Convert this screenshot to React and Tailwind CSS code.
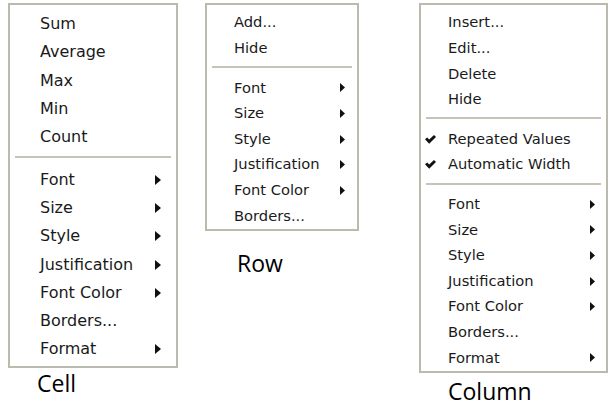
import React from "react";

const Arrow = ({ big }) =>
  big ? (
    <svg width="6" height="10" viewBox="0 0 6 10" className="shrink-0">
      <path d="M0 0 L6 5 L0 10 Z" fill="#111" />
    </svg>
  ) : (
    <svg width="5" height="9" viewBox="0 0 5 9" className="shrink-0">
      <path d="M0 0 L5 4.5 L0 9 Z" fill="#111" />
    </svg>
  );

const Check = () => (
  <svg width="11" height="9" viewBox="0 0 11 9" className="shrink-0">
    <path d="M0 4.2 L2.2 2.4 L4.2 4.6 L9 0 L11 1.9 L4.2 8.7 Z" fill="#111" />
  </svg>
);

const cellItems = [
  { label: "Sum" },
  { label: "Average" },
  { label: "Max" },
  { label: "Min" },
  { label: "Count" },
  "sep",
  { label: "Font", arrow: true },
  { label: "Size", arrow: true },
  { label: "Style", arrow: true },
  { label: "Justification", arrow: true },
  { label: "Font Color", arrow: true },
  { label: "Borders..." },
  { label: "Format", arrow: true },
];

const rowItems = [
  { label: "Add..." },
  { label: "Hide" },
  "sep",
  { label: "Font", arrow: true },
  { label: "Size", arrow: true },
  { label: "Style", arrow: true },
  { label: "Justification", arrow: true },
  { label: "Font Color", arrow: true },
  { label: "Borders..." },
];

const columnItems = [
  { label: "Insert..." },
  { label: "Edit..." },
  { label: "Delete" },
  { label: "Hide" },
  "sep",
  { label: "Repeated Values", check: true },
  { label: "Automatic Width", check: true },
  "sep",
  { label: "Font", arrow: true },
  { label: "Size", arrow: true },
  { label: "Style", arrow: true },
  { label: "Justification", arrow: true },
  { label: "Font Color", arrow: true },
  { label: "Borders..." },
  { label: "Format", arrow: true },
];

// one popup menu, sizes passed in as full class strings
const Menu = ({ items, big, boxClass, itemClass, textClass, checkClass }) => (
  <div className={`bg-white border-2 border-[#bcb9ad] ${boxClass}`}>
    {items.map((item, i) =>
      item === "sep" ? (
        <div key={i} className="py-[6px] px-[5px]">
          <div className="h-[2px] bg-[#c6c3b8]" />
        </div>
      ) : (
        <div key={i} className={`relative flex items-center ${itemClass}`}>
          {item.check && (
            <span className={`absolute flex translate-y-[1px] ${checkClass}`}>
              <Check />
            </span>
          )}
          <span className={`flex-1 text-[#1a1a1a] translate-y-[1px] ${textClass}`}>
            {item.label}
          </span>
          {item.arrow && (
            <span className="flex translate-y-[1px]">
              <Arrow big={big} />
            </span>
          )}
        </div>
      )
    )}
  </div>
);

export default function App() {
  return (
    <div
      className="w-[608px] h-[406px] bg-white flex items-start overflow-hidden"
      style={{ fontFamily: '"DejaVu Sans", Verdana, sans-serif' }}
    >
      {/* Cell */}
      <div className="ml-[8px] mt-[3px] flex flex-col">
        <Menu
          items={cellItems}
          big
          boxClass="w-[170px] pt-[4px] pb-[3px]"
          itemClass="h-[28.3px] pl-[30px] pr-[15px]"
          textClass="text-[16px] leading-none"
        />
        <div className="ml-[29px] mt-[4px] text-[23px] leading-none text-black font-['Open_Sans',sans-serif]">
          Cell
        </div>
      </div>

      {/* Row */}
      <div className="ml-[27px] mt-[3px] flex flex-col">
        <Menu
          items={rowItems}
          boxClass="w-[154px] pt-[4px] pb-[1px]"
          itemClass="h-[25.6px] pl-[27px] pr-[12px]"
          textClass="text-[14.7px] leading-none"
        />
        <div className="ml-[32px] mt-[21px] text-[23px] leading-none text-black font-['Open_Sans',sans-serif]">
          Row
        </div>
      </div>

      {/* Column */}
      <div className="ml-[60px] mt-[3px] flex flex-col">
        <Menu
          items={columnItems}
          boxClass="w-[189px] pt-[4px] pb-[1px]"
          itemClass="h-[25.6px] pl-[27px] pr-[11px]"
          textClass="text-[14.7px] leading-none"
          checkClass="left-[4px]"
        />
        <div className="ml-[29px] mt-[7px] text-[23px] leading-none text-black font-['Open_Sans',sans-serif]">
          Column
        </div>
      </div>
    </div>
  );
}
